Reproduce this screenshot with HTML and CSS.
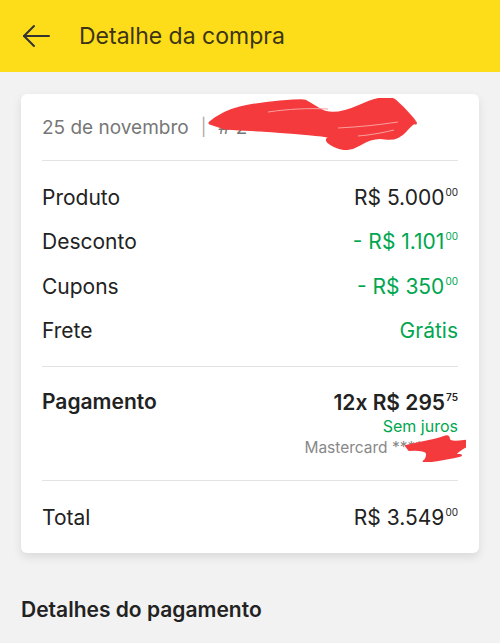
FILE: index.html
```html
<!DOCTYPE html>
<html lang="pt-BR">
<head>
    <meta charset="UTF-8">
    <meta name="viewport" content="width=device-width, initial-scale=1.0">
    <title>Detalhe da compra</title>
    <link rel="stylesheet" href="styles.css">
</head>
<body>

<header class="topbar">
    <svg class="back-icon" width="28" height="24" viewBox="0 0 28 24" fill="none" stroke="#333" stroke-width="2" stroke-linecap="round" stroke-linejoin="round">
        <path d="M27 12H2"/>
        <path d="M12 2L2 12l10 10"/>
    </svg>
    <h1 class="topbar-title">Detalhe da compra</h1>
</header>

<main class="content">
    <div class="card">
        <div class="card-head">
            <span>25 de novembro</span>
            <span class="sep">|</span>
            <span>#&nbsp;2</span>
            <!-- rabisco vermelho por cima do número do pedido -->
            <svg class="scribble scribble-order" width="212" height="52" viewBox="0 0 212 52">
                <path fill="#f43a3c" stroke="#f43a3c" stroke-width="3" stroke-linejoin="round"
                      d="M2 25Q15 14 32 10T72 4T97 3T112 12T152 8T187 3T202 18T207 25T197 33T177 40T152 46T127 48T122 40T92 35T52 32T17 30Z"/>
                <path fill="none" stroke="#f9a0a0" stroke-width="1" d="M60 14c20-3 40-4 60-3M130 30c20-1 40-3 60-6M150 38c12-1 24-3 36-6"/>
            </svg>
        </div>

        <div class="rows">
            <div class="row">
                <span>Produto</span>
                <span class="amount">R$ 5.000<sup>00</sup></span>
            </div>
            <div class="row">
                <span>Desconto</span>
                <span class="amount green">- R$ 1.101<sup>00</sup></span>
            </div>
            <div class="row">
                <span>Cupons</span>
                <span class="amount green">- R$ 350<sup>00</sup></span>
            </div>
            <div class="row">
                <span>Frete</span>
                <span class="amount green">Grátis</span>
            </div>
        </div>

        <div class="payment">
            <span class="label-bold">Pagamento</span>
            <div class="payment-info">
                <span class="amount bold">12x R$ 295<sup>75</sup></span>
                <span class="no-interest">Sem juros</span>
                <span class="card-name">Mastercard ****
                    <svg class="scribble scribble-card" width="62" height="28" viewBox="0 0 62 28">
                        <path fill="#f43a3c" stroke="#f43a3c" stroke-width="2" stroke-linejoin="round"
                              d="M2 12Q15 9 25 7T40 3T45 5T60 7T61 13T55 21T40 25T20 27T23 20T5 16Z"/>
                    </svg>
                </span>
            </div>
        </div>

        <div class="row total">
            <span>Total</span>
            <span class="amount">R$ 3.549<sup>00</sup></span>
        </div>
    </div>

    <h2 class="section-title">Detalhes do pagamento</h2>
</main>

</body>
</html>
```

FILE: styles.css
```css
body {
    font-family: Inter, "Open Sans", sans-serif;
    margin: 0;
    padding: 0;
    background-color: #f2f2f2;
    color: #222;
}

.topbar {
    background-color: #fddc19;
    height: 72px;
    display: flex;
    align-items: center;
    padding: 0 22px;
    box-sizing: border-box;
}

.back-icon {
    flex: none;
}

.topbar-title {
    margin: 0 0 0 29px;
    font-size: 23px;
    font-weight: 400;
    color: #3b3514;
}

.content {
    padding: 22px 21px 0;
}

.card {
    background-color: white;
    border-radius: 6px;
    box-shadow: 0 4px 10px rgba(0, 0, 0, 0.1);
    padding: 0 21px;
}

.card-head {
    position: relative;
    height: 66px;
    display: flex;
    align-items: center;
    gap: 8px;
    font-size: 19px;
    color: #777;
    border-bottom: 1px solid #e2e2e2;
}

.card-head .sep {
    color: #aaa;
    font-size: 17px;
    margin: 0 4px;
}

.scribble {
    position: absolute;
}

.scribble-order {
    left: 166px;
    top: 4px;
}

.rows {
    padding: 14px 0 13px;
    border-bottom: 1px solid #e2e2e2;
}

.row {
    display: flex;
    justify-content: space-between;
    align-items: center;
    height: 44.5px;
    font-size: 21px;
}

.amount sup {
    font-size: 10px;
    vertical-align: 9px;
    margin-left: 1px;
}

.green {
    color: #00a650;
}

.payment {
    display: flex;
    justify-content: space-between;
    align-items: flex-start;
    padding: 22px 0 22px;
    border-bottom: 1px solid #e2e2e2;
}

.label-bold {
    font-size: 21px;
    font-weight: 600;
}

.payment-info {
    display: flex;
    flex-direction: column;
    align-items: flex-end;
    line-height: 1.3;
}

.bold {
    font-size: 21px;
    font-weight: 600;
}

.no-interest {
    font-size: 16px;
    color: #00a650;
}

.card-name {
    position: relative;
    font-size: 15.5px;
    color: #888;
    padding-right: 35px;
    margin-top: 1px;
}

.scribble-card {
    right: -8px;
    top: -4px;
}

.total {
    height: 72px;
}

.section-title {
    margin: 44px 0 0;
    font-size: 21px;
    font-weight: 600;
    color: #222;
}
```
